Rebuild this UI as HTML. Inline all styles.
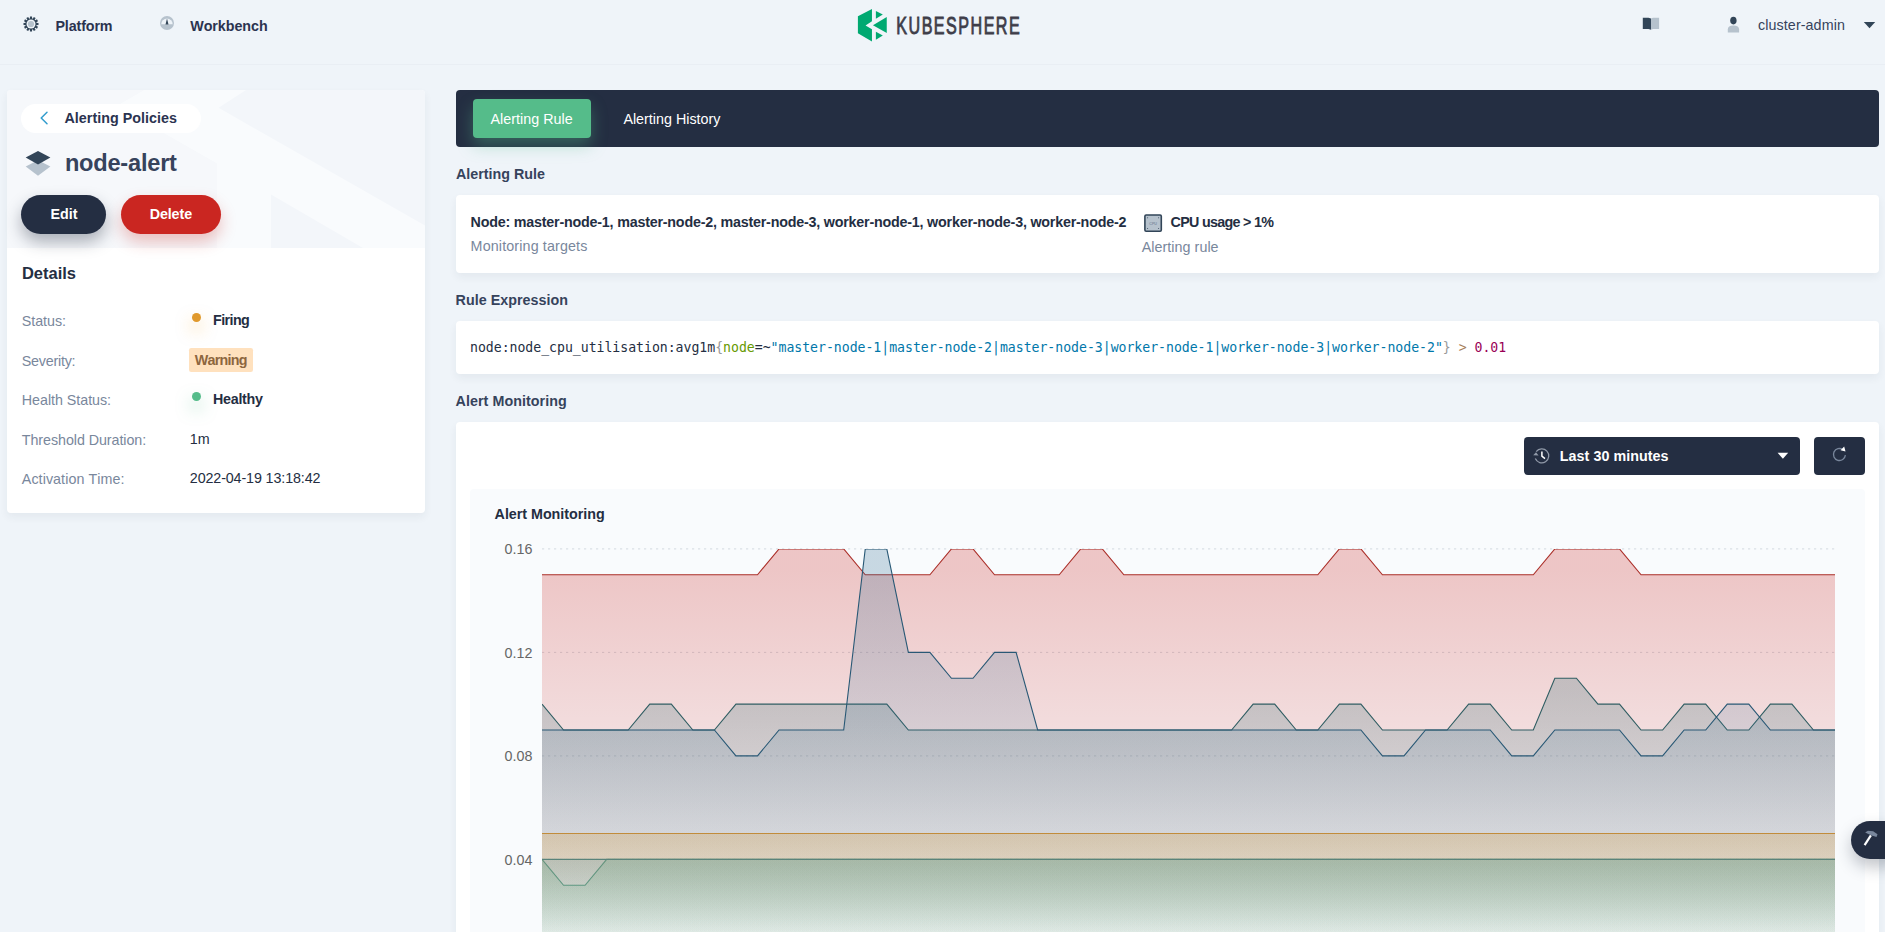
<!DOCTYPE html>
<html lang="en"><head><meta charset="utf-8"><title>KubeSphere - node-alert</title>
<style>
html,body{margin:0;padding:0}
body{width:1885px;height:932px;overflow:hidden;position:relative;background:#eff4f9;font-family:"Liberation Sans",sans-serif;font-kerning:none;-webkit-font-smoothing:antialiased}
.a{position:absolute;display:block}
.t{position:absolute;white-space:nowrap;margin:0}
.card{background:#fff;border-radius:4px;box-shadow:0 4px 8px 0 rgba(36,46,66,.06)}
.btn{border-radius:20px}
.dot{width:9.2px;height:9.2px;border-radius:50%}
.hdrline{position:absolute;left:0;top:64px;width:1885px;height:1px;background:#e9eef4}
</style></head>
<body>
<div class="hdrline"></div>
<svg class="a" style="left:22px;top:14.5px" width="18" height="18" viewBox="0 0 18 18">
<g transform="translate(9,9)">
<g fill="#324558">
<rect x="-1.05" y="-7.5" width="2.1" height="15"/>
<rect x="-1.05" y="-7.5" width="2.1" height="15" transform="rotate(30)"/>
<rect x="-1.05" y="-7.5" width="2.1" height="15" transform="rotate(60)"/>
<rect x="-1.05" y="-7.5" width="2.1" height="15" transform="rotate(90)"/>
<rect x="-1.05" y="-7.5" width="2.1" height="15" transform="rotate(120)"/>
<rect x="-1.05" y="-7.5" width="2.1" height="15" transform="rotate(150)"/>
<circle r="5.7"/></g>
<circle r="4.5" fill="#eff4f9"/><circle r="3.1" fill="#b6c2cd"/>
</g></svg>
<span class="t" style="left:55.40px;top:16.00px;font-size:14.3px;line-height:20px;font-weight:700;color:#2b3350;letter-spacing:-0.115px;">Platform</span>
<svg class="a" style="left:158.5px;top:15.3px" width="16" height="16" viewBox="0 0 16 16">
<circle cx="8" cy="8" r="7" fill="#b6c2cd"/>
<path d="M2.3 9.2A5.7 5.7 0 1 1 13.7 9.2Z" fill="#eef3f8"/>
<path d="M8 3.4L9.5 9.6H6.5Z" fill="#324558"/>
</svg>
<span class="t" style="left:190.20px;top:16.00px;font-size:14.3px;line-height:20px;font-weight:700;color:#2b3350;letter-spacing:-0.045px;">Workbench</span>
<svg class="a" style="left:850px;top:0" width="180" height="50" viewBox="850 0 180 50">
<g fill="#00a971">
<polygon points="871.96,8.91 857.9,16.31 857.9,33.34 871.96,41.49 871.96,29.15 865.55,25.45 871.96,21.25"/>
<polygon points="875.9,10.88 882.8,14.59 875.9,18.78"/>
<polygon points="886.77,17.05 886.77,33.1 872.95,25.2"/>
<polygon points="875.9,31.86 882.8,35.56 875.9,39.76"/>
</g>
<text transform="translate(896.3,33.9) scale(0.66,1)" font-family="Liberation Sans, sans-serif" font-size="24.4" font-weight="400" fill="#3e3d49" stroke="#3e3d49" stroke-width="0.9" textLength="187" lengthAdjust="spacing">KUBESPHERE</text>
</svg>
<svg class="a" style="left:1640px;top:14px" width="24" height="20" viewBox="1640 14 24 20">
<path d="M1642.8 17.8H1648.5L1651 18.6V29.8L1648.5 29H1642.8Z" fill="#324558"/>
<path d="M1651 18.6L1653 17.8H1659.1V29H1653L1651 29.8Z" fill="#b6c2cd"/>
</svg>
<svg class="a" style="left:1724px;top:14px" width="20" height="22" viewBox="1724 14 20 22">
<ellipse cx="1733.4" cy="20.6" rx="3.2" ry="3.8" fill="#324558"/>
<path d="M1727.8 32.5V29.2C1727.8 26.8 1729.6 25.4 1733.4 25.4C1737.2 25.4 1739.1 26.8 1739.1 29.2V32.5Z" fill="#b6c2cd"/>
</svg>
<span class="t" style="left:1758.00px;top:15.00px;font-size:14.3px;line-height:20px;font-weight:400;color:#36435c;letter-spacing:0.089px;">cluster-admin</span>
<svg class="a" style="left:1862px;top:20px" width="16" height="10" viewBox="1862 20 16 10"><path d="M1863.8 21.9H1875.2L1869.5 28.3Z" fill="#324558"/></svg>
<div class="a card" style="left:7px;top:90px;width:418px;height:423px"></div>
<div class="a" style="left:7px;top:90px;width:418px;height:157.6px;background:#f3f6fa;border-radius:4px 4px 0 0;overflow:hidden">
<svg width="418" height="158" viewBox="7 90 418 158" style="position:absolute;left:0;top:0">
<polygon fill="#f9fbfd" points="143.8,90 246,90 218.6,107.8 425,225.5 425,248 363,248 271,194.5 271,248 216.7,248 216.7,163.4 116,106"/>
<polygon fill="#f6f8fb" points="7,90 143.8,90 116,106 216.7,163.4 216.7,248 7,248"/>
</svg></div>
<div class="a" style="left:21px;top:104px;width:180px;height:28.6px;border-radius:15px;background:#fff"></div>
<svg class="a" style="left:36px;top:108px" width="16" height="20" viewBox="36 108 16 20"><path d="M47 112.3L41.2 118L47 123.7" fill="none" stroke="#329dce" stroke-width="1.5" stroke-linecap="round" stroke-linejoin="round"/></svg>
<span class="t" style="left:64.50px;top:108.00px;font-size:14.3px;line-height:20px;font-weight:700;color:#2b3350;letter-spacing:0.028px;">Alerting Policies</span>
<svg class="a" style="left:24px;top:149px" width="28" height="29" viewBox="24 149 28 29">
<polygon points="38,160.3 50.4,166.6 38,175.8 25.7,166.6" fill="#b6c2cd"/>
<polygon points="38,150.9 50.4,157.5 38,164.6 25.7,157.5" fill="#324558"/>
</svg>
<span class="t" style="left:64.90px;top:147.00px;font-size:23.6px;line-height:33px;font-weight:700;color:#36435c;letter-spacing:-0.220px;">node-alert</span>
<div class="a btn" style="left:21px;top:194.8px;width:85px;height:39px;background:#242e42;box-shadow:0 8px 16px 0 rgba(35,45,65,.36)"></div>
<span class="t" style="left:50.50px;top:204.00px;font-size:14.3px;line-height:20px;font-weight:700;color:#fff;letter-spacing:0.031px;">Edit</span>
<div class="a btn" style="left:121px;top:194.8px;width:100.2px;height:39px;background:#ca2621;box-shadow:0 8px 16px 0 rgba(202,38,33,.28)"></div>
<span class="t" style="left:149.70px;top:204.00px;font-size:14.3px;line-height:20px;font-weight:700;color:#fff;letter-spacing:-0.104px;">Delete</span>
<span class="t" style="left:21.90px;top:262.00px;font-size:16.5px;line-height:23px;font-weight:700;color:#242e42;letter-spacing:-0.001px;">Details</span>
<span class="t" style="left:21.80px;top:311.00px;font-size:14.3px;line-height:20px;font-weight:400;color:#79879c;letter-spacing:-0.052px;">Status:</span>
<span class="t" style="left:21.80px;top:351.00px;font-size:14.3px;line-height:20px;font-weight:400;color:#79879c;letter-spacing:-0.229px;">Severity:</span>
<span class="t" style="left:21.80px;top:390.00px;font-size:14.3px;line-height:20px;font-weight:400;color:#79879c;letter-spacing:-0.040px;">Health Status:</span>
<span class="t" style="left:21.80px;top:430.00px;font-size:14.3px;line-height:20px;font-weight:400;color:#79879c;letter-spacing:-0.066px;">Threshold Duration:</span>
<span class="t" style="left:21.80px;top:469.00px;font-size:14.3px;line-height:20px;font-weight:400;color:#79879c;letter-spacing:0.065px;">Activation Time:</span>
<div class="a dot" style="left:191.7px;top:313.2px;background:#e0992c;box-shadow:0 8px 16px 0 rgba(245,166,35,.5)"></div>
<span class="t" style="left:213.10px;top:310.00px;font-size:14.3px;line-height:20px;font-weight:700;color:#242e42;letter-spacing:-0.603px;">Firing</span>
<div class="a" style="left:189.2px;top:348.3px;width:63.4px;height:23.3px;border-radius:2.2px;background:#ffe1be"></div>
<span class="t" style="left:194.80px;top:350.00px;font-size:14.3px;line-height:20px;font-weight:700;color:#8d663e;letter-spacing:-0.766px;">Warning</span>
<div class="a dot" style="left:191.7px;top:392.2px;background:#55bc8a;box-shadow:0 8px 16px 0 rgba(85,188,138,.5)"></div>
<span class="t" style="left:213.10px;top:389.00px;font-size:14.3px;line-height:20px;font-weight:700;color:#242e42;letter-spacing:-0.309px;">Healthy</span>
<span class="t" style="left:189.80px;top:429.00px;font-size:14.3px;line-height:20px;font-weight:400;color:#242e42;letter-spacing:0.000px;">1m</span>
<span class="t" style="left:189.80px;top:468.00px;font-size:14.3px;line-height:20px;font-weight:400;color:#242e42;letter-spacing:-0.116px;">2022-04-19 13:18:42</span>
<div class="a" style="left:456px;top:90.2px;width:1423px;height:56.6px;border-radius:4px;background:#242e42"></div>
<div class="a" style="left:473.1px;top:99px;width:118px;height:39px;border-radius:4px;background:#55bc8a;box-shadow:0 8px 16px 0 rgba(85,188,138,.36)"></div>
<span class="t" style="left:490.40px;top:109.00px;font-size:14.3px;line-height:20px;font-weight:400;color:#fff;letter-spacing:0.044px;">Alerting Rule</span>
<span class="t" style="left:623.40px;top:109.00px;font-size:14.3px;line-height:20px;font-weight:400;color:#fff;letter-spacing:0.010px;">Alerting History</span>
<span class="t" style="left:456.00px;top:164.00px;font-size:14.3px;line-height:20px;font-weight:700;color:#36435c;letter-spacing:0.001px;">Alerting Rule</span>
<div class="a card" style="left:456px;top:195.3px;width:1423px;height:77.7px"></div>
<span class="t" style="left:470.60px;top:212.00px;font-size:14.3px;line-height:20px;font-weight:700;color:#242e42;letter-spacing:-0.209px;">Node: master-node-1, master-node-2, master-node-3, worker-node-1, worker-node-3, worker-node-2</span>
<span class="t" style="left:470.60px;top:236.00px;font-size:14.3px;line-height:20px;font-weight:400;color:#79879c;letter-spacing:0.138px;">Monitoring targets</span>
<svg class="a" style="left:1143px;top:213px" width="20" height="20" viewBox="1143 213 20 20">
<rect x="1144.9" y="215" width="16.4" height="16.2" rx="1.2" fill="#b6c2cd" stroke="#324558" stroke-width="1.6"/>
<text x="1153.1" y="224.6" font-size="3.6" font-family="Liberation Sans, sans-serif" fill="#5f708a" text-anchor="middle">CPU</text>
<g fill="#324558"><circle cx="1147.6" cy="217.7" r=".5"/><circle cx="1158.6" cy="217.7" r=".5"/><circle cx="1147.6" cy="228.5" r=".5"/><circle cx="1158.6" cy="228.5" r=".5"/></g>
</svg>
<span class="t" style="left:1170.50px;top:212.00px;font-size:14.3px;line-height:20px;font-weight:700;color:#242e42;letter-spacing:-0.689px;">CPU usage &gt; 1%</span>
<span class="t" style="left:1141.70px;top:237.00px;font-size:14.3px;line-height:20px;font-weight:400;color:#79879c;letter-spacing:0.050px;">Alerting rule</span>
<span class="t" style="left:455.60px;top:290.00px;font-size:14.3px;line-height:20px;font-weight:700;color:#36435c;letter-spacing:0.025px;">Rule Expression</span>
<div class="a card" style="left:456px;top:321.2px;width:1423px;height:53px"></div>
<span class="t" style="left:455.60px;top:391.00px;font-size:14.3px;line-height:20px;font-weight:700;color:#36435c;letter-spacing:0.052px;">Alert Monitoring</span>
<div class="a card" style="left:456px;top:422px;width:1423px;height:560px"></div>
<div class="a" style="left:470.2px;top:489.4px;width:1394.5px;height:500px;border-radius:4px;background:#f9fbfd"></div>
<div class="a" style="left:1523.9px;top:437.2px;width:276px;height:37.5px;border-radius:4px;background:#242e42"></div>
<svg class="a" style="left:1532px;top:446px" width="20" height="20" viewBox="1532 446 20 20">
<path d="M1536.2 451.6A7 7 0 1 1 1535.3 458.6" fill="none" stroke="#9099a8" stroke-width="1.3"/>
<path d="M1533.2 455.2L1536 452.2L1538.6 455.6Z" fill="#9099a8"/>
<path d="M1541.9 451.6V456.2L1545 458.6" fill="none" stroke="#fff" stroke-width="1.5"/>
</svg>
<span class="t" style="left:1559.80px;top:446.00px;font-size:14.3px;line-height:20px;font-weight:700;color:#fff;letter-spacing:0.044px;">Last 30 minutes</span>
<svg class="a" style="left:1775px;top:450px" width="16" height="12" viewBox="1775 450 16 12"><path d="M1777.6 452.8H1788.2L1782.9 458.8Z" fill="#fff"/></svg>
<div class="a" style="left:1814.1px;top:437.2px;width:50.9px;height:37.5px;border-radius:4px;background:#242e42"></div>
<svg class="a" style="left:1829px;top:444px" width="22" height="22" viewBox="1829 444 22 22">
<path d="M1842.9 449.6A6 6 0 1 0 1845.4 455.2" fill="none" stroke="#79879c" stroke-width="1.3"/>
<path d="M1840.6 450.2L1844.2 446.4L1845.5 451.4Z" fill="#fff"/>
</svg>
<span class="t" style="left:494.60px;top:504.00px;font-size:14.3px;line-height:20px;font-weight:700;color:#242e42;letter-spacing:-0.021px;">Alert Monitoring</span>
<div class="t" style="left:470px;top:338.00px;font-family:'DejaVu Sans Mono','Liberation Mono',monospace;font-size:13.2px;line-height:20px;letter-spacing:-0.031px;white-space:pre"><span style="color:#242e42">node:node_cpu_utilisation:avg1m</span><span style="color:#999">{</span><span style="color:#690">node</span><span style="color:#242e42">=~</span><span style="color:#07a">&quot;master-node-1|master-node-2|master-node-3|worker-node-1|worker-node-3|worker-node-2&quot;</span><span style="color:#999">}</span><span style="color:#242e42"> </span><span style="color:#a67f59">&gt;</span><span style="color:#242e42"> </span><span style="color:#905">0.01</span></div>
<svg class="a" style="left:0;top:0" width="1885" height="932" viewBox="0 0 1885 932">
<defs>
<linearGradient id="g-green" x1="0" y1="0" x2="0" y2="1"><stop offset="5%" stop-color="#55bc8a" stop-opacity="0.25"/><stop offset="95%" stop-color="#55bc8a" stop-opacity="0"/></linearGradient>
<linearGradient id="g-blue" x1="0" y1="0" x2="0" y2="1"><stop offset="5%" stop-color="#329dce" stop-opacity="0.25"/><stop offset="95%" stop-color="#329dce" stop-opacity="0"/></linearGradient>
<linearGradient id="g-yellow" x1="0" y1="0" x2="0" y2="1"><stop offset="5%" stop-color="#f5a623" stop-opacity="0.25"/><stop offset="95%" stop-color="#f5a623" stop-opacity="0"/></linearGradient>
<linearGradient id="g-red" x1="0" y1="0" x2="0" y2="1"><stop offset="5%" stop-color="#ca2621" stop-opacity="0.25"/><stop offset="95%" stop-color="#ca2621" stop-opacity="0"/></linearGradient>
<linearGradient id="g-dgreen" x1="0" y1="0" x2="0" y2="1"><stop offset="5%" stop-color="#3b747a" stop-opacity="0.25"/><stop offset="95%" stop-color="#3b747a" stop-opacity="0"/></linearGradient>
<linearGradient id="g-dblue" x1="0" y1="0" x2="0" y2="1"><stop offset="5%" stop-color="#326e93" stop-opacity="0.25"/><stop offset="95%" stop-color="#326e93" stop-opacity="0"/></linearGradient>
<clipPath id="plot"><rect x="542.0" y="548.9" width="1293.0" height="420"/></clipPath>
</defs>
<line x1="542.0" x2="1835.0" y1="548.90" y2="548.90" stroke="#d3d9e0" stroke-width="1" stroke-dasharray="2.2 3.8"/>
<text x="532.4" y="554" text-anchor="end" font-family="Liberation Sans, sans-serif" font-size="14.3" fill="#666">0.16</text>
<line x1="542.0" x2="1835.0" y1="652.40" y2="652.40" stroke="#d3d9e0" stroke-width="1" stroke-dasharray="2.2 3.8"/>
<text x="532.4" y="658" text-anchor="end" font-family="Liberation Sans, sans-serif" font-size="14.3" fill="#666">0.12</text>
<line x1="542.0" x2="1835.0" y1="755.90" y2="755.90" stroke="#d3d9e0" stroke-width="1" stroke-dasharray="2.2 3.8"/>
<text x="532.4" y="761" text-anchor="end" font-family="Liberation Sans, sans-serif" font-size="14.3" fill="#666">0.08</text>
<line x1="542.0" x2="1835.0" y1="859.40" y2="859.40" stroke="#d3d9e0" stroke-width="1" stroke-dasharray="2.2 3.8"/>
<text x="532.4" y="865" text-anchor="end" font-family="Liberation Sans, sans-serif" font-size="14.3" fill="#666">0.04</text>
<g clip-path="url(#plot)">
<path d="M542.00,859.40L563.55,885.27L585.10,885.27L606.65,859.40L628.20,859.40L649.75,859.40L671.30,859.40L692.85,859.40L714.40,859.40L735.95,859.40L757.50,859.40L779.05,859.40L800.60,859.40L822.15,859.40L843.70,859.40L865.25,859.40L886.80,859.40L908.35,859.40L929.90,859.40L951.45,859.40L973.00,859.40L994.55,859.40L1016.10,859.40L1037.65,859.40L1059.20,859.40L1080.75,859.40L1102.30,859.40L1123.85,859.40L1145.40,859.40L1166.95,859.40L1188.50,859.40L1210.05,859.40L1231.60,859.40L1253.15,859.40L1274.70,859.40L1296.25,859.40L1317.80,859.40L1339.35,859.40L1360.90,859.40L1382.45,859.40L1404.00,859.40L1425.55,859.40L1447.10,859.40L1468.65,859.40L1490.20,859.40L1511.75,859.40L1533.30,859.40L1554.85,859.40L1576.40,859.40L1597.95,859.40L1619.50,859.40L1641.05,859.40L1662.60,859.40L1684.15,859.40L1705.70,859.40L1727.25,859.40L1748.80,859.40L1770.35,859.40L1791.90,859.40L1813.45,859.40L1835.00,859.40L1835.00,962.90L542.00,962.90Z" fill="url(#g-green)" stroke="none"/>
<path d="M542.00,859.40L563.55,885.27L585.10,885.27L606.65,859.40L628.20,859.40L649.75,859.40L671.30,859.40L692.85,859.40L714.40,859.40L735.95,859.40L757.50,859.40L779.05,859.40L800.60,859.40L822.15,859.40L843.70,859.40L865.25,859.40L886.80,859.40L908.35,859.40L929.90,859.40L951.45,859.40L973.00,859.40L994.55,859.40L1016.10,859.40L1037.65,859.40L1059.20,859.40L1080.75,859.40L1102.30,859.40L1123.85,859.40L1145.40,859.40L1166.95,859.40L1188.50,859.40L1210.05,859.40L1231.60,859.40L1253.15,859.40L1274.70,859.40L1296.25,859.40L1317.80,859.40L1339.35,859.40L1360.90,859.40L1382.45,859.40L1404.00,859.40L1425.55,859.40L1447.10,859.40L1468.65,859.40L1490.20,859.40L1511.75,859.40L1533.30,859.40L1554.85,859.40L1576.40,859.40L1597.95,859.40L1619.50,859.40L1641.05,859.40L1662.60,859.40L1684.15,859.40L1705.70,859.40L1727.25,859.40L1748.80,859.40L1770.35,859.40L1791.90,859.40L1813.45,859.40L1835.00,859.40" fill="none" stroke="#479e88" stroke-width="1.1"/>
<path d="M542.00,859.40L563.55,859.40L585.10,859.40L606.65,859.40L628.20,859.40L649.75,859.40L671.30,859.40L692.85,859.40L714.40,859.40L735.95,859.40L757.50,859.40L779.05,859.40L800.60,859.40L822.15,859.40L843.70,859.40L865.25,859.40L886.80,859.40L908.35,859.40L929.90,859.40L951.45,859.40L973.00,859.40L994.55,859.40L1016.10,859.40L1037.65,859.40L1059.20,859.40L1080.75,859.40L1102.30,859.40L1123.85,859.40L1145.40,859.40L1166.95,859.40L1188.50,859.40L1210.05,859.40L1231.60,859.40L1253.15,859.40L1274.70,859.40L1296.25,859.40L1317.80,859.40L1339.35,859.40L1360.90,859.40L1382.45,859.40L1404.00,859.40L1425.55,859.40L1447.10,859.40L1468.65,859.40L1490.20,859.40L1511.75,859.40L1533.30,859.40L1554.85,859.40L1576.40,859.40L1597.95,859.40L1619.50,859.40L1641.05,859.40L1662.60,859.40L1684.15,859.40L1705.70,859.40L1727.25,859.40L1748.80,859.40L1770.35,859.40L1791.90,859.40L1813.45,859.40L1835.00,859.40L1835.00,962.90L542.00,962.90Z" fill="url(#g-blue)" stroke="none"/>
<path d="M542.00,859.40L563.55,859.40L585.10,859.40L606.65,859.40L628.20,859.40L649.75,859.40L671.30,859.40L692.85,859.40L714.40,859.40L735.95,859.40L757.50,859.40L779.05,859.40L800.60,859.40L822.15,859.40L843.70,859.40L865.25,859.40L886.80,859.40L908.35,859.40L929.90,859.40L951.45,859.40L973.00,859.40L994.55,859.40L1016.10,859.40L1037.65,859.40L1059.20,859.40L1080.75,859.40L1102.30,859.40L1123.85,859.40L1145.40,859.40L1166.95,859.40L1188.50,859.40L1210.05,859.40L1231.60,859.40L1253.15,859.40L1274.70,859.40L1296.25,859.40L1317.80,859.40L1339.35,859.40L1360.90,859.40L1382.45,859.40L1404.00,859.40L1425.55,859.40L1447.10,859.40L1468.65,859.40L1490.20,859.40L1511.75,859.40L1533.30,859.40L1554.85,859.40L1576.40,859.40L1597.95,859.40L1619.50,859.40L1641.05,859.40L1662.60,859.40L1684.15,859.40L1705.70,859.40L1727.25,859.40L1748.80,859.40L1770.35,859.40L1791.90,859.40L1813.45,859.40L1835.00,859.40" fill="none" stroke="#2f8496" stroke-width="1.1"/>
<path d="M542.00,833.52L563.55,833.52L585.10,833.52L606.65,833.52L628.20,833.52L649.75,833.52L671.30,833.52L692.85,833.52L714.40,833.52L735.95,833.52L757.50,833.52L779.05,833.52L800.60,833.52L822.15,833.52L843.70,833.52L865.25,833.52L886.80,833.52L908.35,833.52L929.90,833.52L951.45,833.52L973.00,833.52L994.55,833.52L1016.10,833.52L1037.65,833.52L1059.20,833.52L1080.75,833.52L1102.30,833.52L1123.85,833.52L1145.40,833.52L1166.95,833.52L1188.50,833.52L1210.05,833.52L1231.60,833.52L1253.15,833.52L1274.70,833.52L1296.25,833.52L1317.80,833.52L1339.35,833.52L1360.90,833.52L1382.45,833.52L1404.00,833.52L1425.55,833.52L1447.10,833.52L1468.65,833.52L1490.20,833.52L1511.75,833.52L1533.30,833.52L1554.85,833.52L1576.40,833.52L1597.95,833.52L1619.50,833.52L1641.05,833.52L1662.60,833.52L1684.15,833.52L1705.70,833.52L1727.25,833.52L1748.80,833.52L1770.35,833.52L1791.90,833.52L1813.45,833.52L1835.00,833.52L1835.00,962.90L542.00,962.90Z" fill="url(#g-yellow)" stroke="none"/>
<path d="M542.00,833.52L563.55,833.52L585.10,833.52L606.65,833.52L628.20,833.52L649.75,833.52L671.30,833.52L692.85,833.52L714.40,833.52L735.95,833.52L757.50,833.52L779.05,833.52L800.60,833.52L822.15,833.52L843.70,833.52L865.25,833.52L886.80,833.52L908.35,833.52L929.90,833.52L951.45,833.52L973.00,833.52L994.55,833.52L1016.10,833.52L1037.65,833.52L1059.20,833.52L1080.75,833.52L1102.30,833.52L1123.85,833.52L1145.40,833.52L1166.95,833.52L1188.50,833.52L1210.05,833.52L1231.60,833.52L1253.15,833.52L1274.70,833.52L1296.25,833.52L1317.80,833.52L1339.35,833.52L1360.90,833.52L1382.45,833.52L1404.00,833.52L1425.55,833.52L1447.10,833.52L1468.65,833.52L1490.20,833.52L1511.75,833.52L1533.30,833.52L1554.85,833.52L1576.40,833.52L1597.95,833.52L1619.50,833.52L1641.05,833.52L1662.60,833.52L1684.15,833.52L1705.70,833.52L1727.25,833.52L1748.80,833.52L1770.35,833.52L1791.90,833.52L1813.45,833.52L1835.00,833.52" fill="none" stroke="#e0992c" stroke-width="1.1"/>
<path d="M542.00,574.77L563.55,574.77L585.10,574.77L606.65,574.77L628.20,574.77L649.75,574.77L671.30,574.77L692.85,574.77L714.40,574.77L735.95,574.77L757.50,574.77L779.05,548.90L800.60,548.90L822.15,548.90L843.70,548.90L865.25,574.77L886.80,574.77L908.35,574.77L929.90,574.77L951.45,548.90L973.00,548.90L994.55,574.77L1016.10,574.77L1037.65,574.77L1059.20,574.77L1080.75,548.90L1102.30,548.90L1123.85,574.77L1145.40,574.77L1166.95,574.77L1188.50,574.77L1210.05,574.77L1231.60,574.77L1253.15,574.77L1274.70,574.77L1296.25,574.77L1317.80,574.77L1339.35,548.90L1360.90,548.90L1382.45,574.77L1404.00,574.77L1425.55,574.77L1447.10,574.77L1468.65,574.77L1490.20,574.77L1511.75,574.77L1533.30,574.77L1554.85,548.90L1576.40,548.90L1597.95,548.90L1619.50,548.90L1641.05,574.77L1662.60,574.77L1684.15,574.77L1705.70,574.77L1727.25,574.77L1748.80,574.77L1770.35,574.77L1791.90,574.77L1813.45,574.77L1835.00,574.77L1835.00,962.90L542.00,962.90Z" fill="url(#g-red)" stroke="none"/>
<path d="M542.00,574.77L563.55,574.77L585.10,574.77L606.65,574.77L628.20,574.77L649.75,574.77L671.30,574.77L692.85,574.77L714.40,574.77L735.95,574.77L757.50,574.77L779.05,548.90L800.60,548.90L822.15,548.90L843.70,548.90L865.25,574.77L886.80,574.77L908.35,574.77L929.90,574.77L951.45,548.90L973.00,548.90L994.55,574.77L1016.10,574.77L1037.65,574.77L1059.20,574.77L1080.75,548.90L1102.30,548.90L1123.85,574.77L1145.40,574.77L1166.95,574.77L1188.50,574.77L1210.05,574.77L1231.60,574.77L1253.15,574.77L1274.70,574.77L1296.25,574.77L1317.80,574.77L1339.35,548.90L1360.90,548.90L1382.45,574.77L1404.00,574.77L1425.55,574.77L1447.10,574.77L1468.65,574.77L1490.20,574.77L1511.75,574.77L1533.30,574.77L1554.85,548.90L1576.40,548.90L1597.95,548.90L1619.50,548.90L1641.05,574.77L1662.60,574.77L1684.15,574.77L1705.70,574.77L1727.25,574.77L1748.80,574.77L1770.35,574.77L1791.90,574.77L1813.45,574.77L1835.00,574.77" fill="none" stroke="#ab2f29" stroke-width="1.1"/>
<path d="M542.00,704.15L563.55,730.02L585.10,730.02L606.65,730.02L628.20,730.02L649.75,704.15L671.30,704.15L692.85,730.02L714.40,730.02L735.95,704.15L757.50,704.15L779.05,704.15L800.60,704.15L822.15,704.15L843.70,704.15L865.25,704.15L886.80,704.15L908.35,730.02L929.90,730.02L951.45,730.02L973.00,730.02L994.55,730.02L1016.10,730.02L1037.65,730.02L1059.20,730.02L1080.75,730.02L1102.30,730.02L1123.85,730.02L1145.40,730.02L1166.95,730.02L1188.50,730.02L1210.05,730.02L1231.60,730.02L1253.15,704.15L1274.70,704.15L1296.25,730.02L1317.80,730.02L1339.35,704.15L1360.90,704.15L1382.45,730.02L1404.00,730.02L1425.55,730.02L1447.10,730.02L1468.65,704.15L1490.20,704.15L1511.75,730.02L1533.30,730.02L1554.85,678.27L1576.40,678.27L1597.95,704.15L1619.50,704.15L1641.05,730.02L1662.60,730.02L1684.15,704.15L1705.70,704.15L1727.25,730.02L1748.80,730.02L1770.35,704.15L1791.90,704.15L1813.45,730.02L1835.00,730.02L1835.00,962.90L542.00,962.90Z" fill="url(#g-dgreen)" stroke="none"/>
<path d="M542.00,704.15L563.55,730.02L585.10,730.02L606.65,730.02L628.20,730.02L649.75,704.15L671.30,704.15L692.85,730.02L714.40,730.02L735.95,704.15L757.50,704.15L779.05,704.15L800.60,704.15L822.15,704.15L843.70,704.15L865.25,704.15L886.80,704.15L908.35,730.02L929.90,730.02L951.45,730.02L973.00,730.02L994.55,730.02L1016.10,730.02L1037.65,730.02L1059.20,730.02L1080.75,730.02L1102.30,730.02L1123.85,730.02L1145.40,730.02L1166.95,730.02L1188.50,730.02L1210.05,730.02L1231.60,730.02L1253.15,704.15L1274.70,704.15L1296.25,730.02L1317.80,730.02L1339.35,704.15L1360.90,704.15L1382.45,730.02L1404.00,730.02L1425.55,730.02L1447.10,730.02L1468.65,704.15L1490.20,704.15L1511.75,730.02L1533.30,730.02L1554.85,678.27L1576.40,678.27L1597.95,704.15L1619.50,704.15L1641.05,730.02L1662.60,730.02L1684.15,704.15L1705.70,704.15L1727.25,730.02L1748.80,730.02L1770.35,704.15L1791.90,704.15L1813.45,730.02L1835.00,730.02" fill="none" stroke="#2f5d62" stroke-width="1.1"/>
<path d="M542.00,730.02L563.55,730.02L585.10,730.02L606.65,730.02L628.20,730.02L649.75,730.02L671.30,730.02L692.85,730.02L714.40,730.02L735.95,755.90L757.50,755.90L779.05,730.02L800.60,730.02L822.15,730.02L843.70,730.02L865.25,548.90L886.80,548.90L908.35,652.40L929.90,652.40L951.45,678.27L973.00,678.27L994.55,652.40L1016.10,652.40L1037.65,730.02L1059.20,730.02L1080.75,730.02L1102.30,730.02L1123.85,730.02L1145.40,730.02L1166.95,730.02L1188.50,730.02L1210.05,730.02L1231.60,730.02L1253.15,730.02L1274.70,730.02L1296.25,730.02L1317.80,730.02L1339.35,730.02L1360.90,730.02L1382.45,755.90L1404.00,755.90L1425.55,730.02L1447.10,730.02L1468.65,730.02L1490.20,730.02L1511.75,755.90L1533.30,755.90L1554.85,730.02L1576.40,730.02L1597.95,730.02L1619.50,730.02L1641.05,755.90L1662.60,755.90L1684.15,730.02L1705.70,730.02L1727.25,704.15L1748.80,704.15L1770.35,730.02L1791.90,730.02L1813.45,730.02L1835.00,730.02L1835.00,962.90L542.00,962.90Z" fill="url(#g-dblue)" stroke="none"/>
<path d="M542.00,730.02L563.55,730.02L585.10,730.02L606.65,730.02L628.20,730.02L649.75,730.02L671.30,730.02L692.85,730.02L714.40,730.02L735.95,755.90L757.50,755.90L779.05,730.02L800.60,730.02L822.15,730.02L843.70,730.02L865.25,548.90L886.80,548.90L908.35,652.40L929.90,652.40L951.45,678.27L973.00,678.27L994.55,652.40L1016.10,652.40L1037.65,730.02L1059.20,730.02L1080.75,730.02L1102.30,730.02L1123.85,730.02L1145.40,730.02L1166.95,730.02L1188.50,730.02L1210.05,730.02L1231.60,730.02L1253.15,730.02L1274.70,730.02L1296.25,730.02L1317.80,730.02L1339.35,730.02L1360.90,730.02L1382.45,755.90L1404.00,755.90L1425.55,730.02L1447.10,730.02L1468.65,730.02L1490.20,730.02L1511.75,755.90L1533.30,755.90L1554.85,730.02L1576.40,730.02L1597.95,730.02L1619.50,730.02L1641.05,755.90L1662.60,755.90L1684.15,730.02L1705.70,730.02L1727.25,704.15L1748.80,704.15L1770.35,730.02L1791.90,730.02L1813.45,730.02L1835.00,730.02" fill="none" stroke="#285875" stroke-width="1.1"/>
</g>
</svg>
<div class="a" style="left:1850.9px;top:820.9px;width:60px;height:38px;border-radius:19px;background:#242e42;box-shadow:0 8px 16px 0 rgba(35,45,65,.28)"></div>
<svg class="a" style="left:1860px;top:826px" width="24" height="24" viewBox="1860 826 24 24">
<path d="M1864.6 845.1L1870.9 835.4" stroke="#fff" stroke-width="2.2" fill="none"/>
<path d="M1865.2 832.6L1867.9 830.7L1873.1 831.2L1877.5 834.2L1876.5 837.1L1871.8 835.4L1868.3 834Z" fill="#79879c"/>
</svg>
</body></html>
